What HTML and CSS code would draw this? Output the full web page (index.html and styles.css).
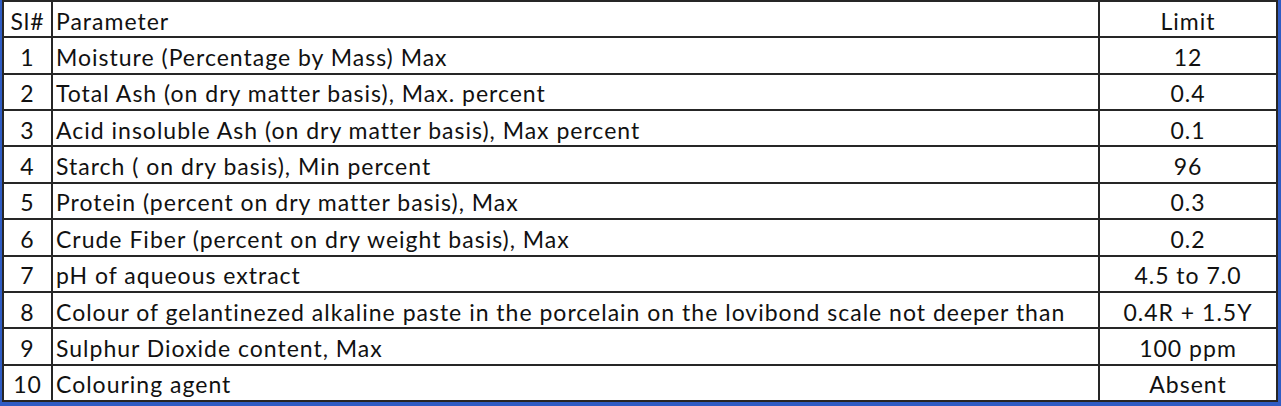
FILE: index.html
```html
<!DOCTYPE html>
<html>
<head>
<meta charset="utf-8">
<link rel="stylesheet" href="styles.css">
</head>
<body>
<div class="frame">
<table class="spec">
<colgroup><col class="c-sl"><col class="c-param"><col class="c-limit"></colgroup>
<tr><td class="num">Sl#</td><td>Parameter</td><td class="lim">Limit</td></tr>
<tr><td class="num">1</td><td>Moisture (Percentage by Mass) Max</td><td class="lim">12</td></tr>
<tr><td class="num">2</td><td>Total Ash (on dry matter basis), Max. percent</td><td class="lim">0.4</td></tr>
<tr><td class="num">3</td><td>Acid insoluble Ash (on dry matter basis), Max percent</td><td class="lim">0.1</td></tr>
<tr><td class="num">4</td><td>Starch ( on dry basis), Min percent</td><td class="lim">96</td></tr>
<tr><td class="num">5</td><td>Protein (percent on dry matter basis), Max</td><td class="lim">0.3</td></tr>
<tr><td class="num">6</td><td>Crude Fiber (percent on dry weight basis), Max</td><td class="lim">0.2</td></tr>
<tr><td class="num">7</td><td>pH of aqueous extract</td><td class="lim">4.5 to 7.0</td></tr>
<tr><td class="num">8</td><td>Colour of gelantinezed alkaline paste in the porcelain on the lovibond scale not deeper than</td><td class="lim">0.4R + 1.5Y</td></tr>
<tr><td class="num">9</td><td>Sulphur Dioxide content, Max</td><td class="lim">100 ppm</td></tr>
<tr><td class="num">10</td><td>Colouring agent</td><td class="lim">Absent</td></tr>
</table>
</div>
</body>
</html>
```

FILE: styles.css
```css
html, body {
  margin: 0;
  padding: 0;
  background: #2f5cc4;
}
.frame {
  width: 1281px;
  height: 406px;
  box-sizing: border-box;
  padding: 0 3px 4px 2px;
  background: #2f5cc4;
}
.spec {
  width: 1276px;
  height: 402px;
  border-collapse: collapse;
  table-layout: fixed;
  background: #ffffff;
  font-family: "Lato", "Liberation Sans", sans-serif;
  font-size: 23px;
  letter-spacing: 1px;
  color: #111111;
}
.c-sl { width: 49px; }
.c-limit { width: 178px; }
.spec td {
  border: 2px solid #262626;
  padding: 3px 0 0 3px;
  height: 29px;
  white-space: nowrap;
  vertical-align: middle;
}
.spec td.num {
  text-align: center;
  padding: 3px 0 0 0;
}
.spec td.lim {
  text-align: center;
  padding: 3px 0 0 0;
}
```
